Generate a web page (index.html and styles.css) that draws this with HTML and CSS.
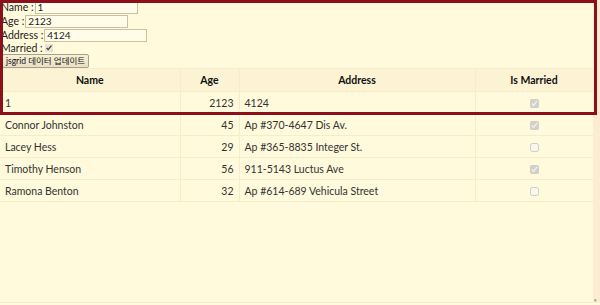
FILE: index.html
```html
<!DOCTYPE html>
<html lang="ko">
<head>
  <meta charset="UTF-8">
  <title>jsgrid 데이터 업데이트</title>
  <link rel="stylesheet" href="styles.css">
</head>
<body>
  <div class="page">
    <div class="main">
      <div class="editor">
        <div class="field">Name : <input class="inp" type="text" value="1"></div>
        <div class="field">Age : <input class="inp" type="text" value="2123"></div>
        <div class="field">Address : <input class="inp" type="text" value="4124"></div>
        <div class="field field-chk">Married : <input class="chk" type="checkbox" checked></div>
        <button class="update-btn">jsgrid 데이터 업데이트</button>
      </div>

      <div class="grid">
        <table class="grid-table">
          <colgroup>
            <col class="c-name"><col class="c-age"><col class="c-addr"><col class="c-mar">
          </colgroup>
          <tr class="head-row">
            <th>Name</th><th>Age</th><th>Address</th><th>Is Married</th>
          </tr>
          <tr>
            <td>1</td><td class="num">2123</td><td>4124</td><td class="center"><input type="checkbox" checked disabled></td>
          </tr>
          <tr>
            <td>Connor Johnston</td><td class="num">45</td><td>Ap #370-4647 Dis Av.</td><td class="center"><input type="checkbox" checked disabled></td>
          </tr>
          <tr>
            <td>Lacey Hess</td><td class="num">29</td><td>Ap #365-8835 Integer St.</td><td class="center"><input type="checkbox" disabled></td>
          </tr>
          <tr>
            <td>Timothy Henson</td><td class="num">56</td><td>911-5143 Luctus Ave</td><td class="center"><input type="checkbox" checked disabled></td>
          </tr>
          <tr>
            <td>Ramona Benton</td><td class="num">32</td><td>Ap #614-689 Vehicula Street</td><td class="center"><input type="checkbox" disabled></td>
          </tr>
        </table>
      </div>

      <div class="focus-box"></div>
    </div>
    <div class="scroll-strip"><span class="arrow">&#9662;</span></div>
  </div>
</body>
</html>
```

FILE: styles.css
```css
* {
  box-sizing: border-box;
}

body {
  margin: 0;
  background: #fffadc;
  color: #222;
  font-family: Lato, "Noto Sans CJK KR", sans-serif;
  font-size: 10px;
}

.page {
  display: flex;
  height: 305px;
}

.main {
  position: relative;
  width: 593px;
}

.scroll-strip {
  flex: 1;
  background: #fdebd2;
  position: relative;
  height: 303px;
}

.arrow {
  position: absolute;
  bottom: 0;
  left: 1px;
  font-size: 5px;
  color: #888;
}

.editor {
  padding-left: 1px;
}

.field {
  display: flex;
  align-items: center;
  gap: 1px;
  height: 14px;
  font-size: 10.5px;
  color: #222;
}

.field-chk {
  height: 12px;
}

.inp {
  width: 103px;
  height: 13px;
  padding: 0 2px;
  border: 1px solid #c9c1a0;
  background: #fffde9;
  font-family: inherit;
  font-size: 10px;
  color: #222;
}

.chk {
  width: 8px;
  height: 8px;
  margin: 0 0 0 1px;
  accent-color: #e9e4d4;
}

.update-btn {
  display: block;
  margin: 0 0 0 1px;
  height: 14px;
  padding: 0 3px;
  font-family: inherit;
  font-size: 8.5px;
  line-height: 12px;
  color: #111;
  background: linear-gradient(#f6f0d8, #e8e0c2);
  border: 1px solid #a9a187;
  border-radius: 2px;
}

.grid {
  height: 235px;
  border-bottom: 1px solid #f3ead0;
}

.grid-table {
  width: 593px;
  border-collapse: collapse;
  table-layout: fixed;
}

.c-name { width: 180px; }
.c-age { width: 59px; }
.c-addr { width: 236px; }
.c-mar { width: 118px; }

th, td {
  height: 22px;
  padding: 0 5px;
  border: 1px solid #f6eccc;
  white-space: nowrap;
  overflow: hidden;
}

th {
  height: 23px;
  background: #fcf3d4;
  font-weight: bold;
  font-size: 10.5px;
  color: #111;
  text-align: center;
}

td {
  font-size: 10.5px;
  color: #333;
}

tr > :first-child {
  border-left: none;
}

.num {
  text-align: right;
}

.center {
  text-align: center;
}

td input[type="checkbox"] {
  width: 9px;
  height: 9px;
  margin: 0;
  vertical-align: middle;
}

.focus-box {
  position: absolute;
  z-index: 2;
  left: 0;
  top: 0;
  width: 597px;
  height: 115px;
  border: 3px solid #8c0f1c;
  pointer-events: none;
}
```
